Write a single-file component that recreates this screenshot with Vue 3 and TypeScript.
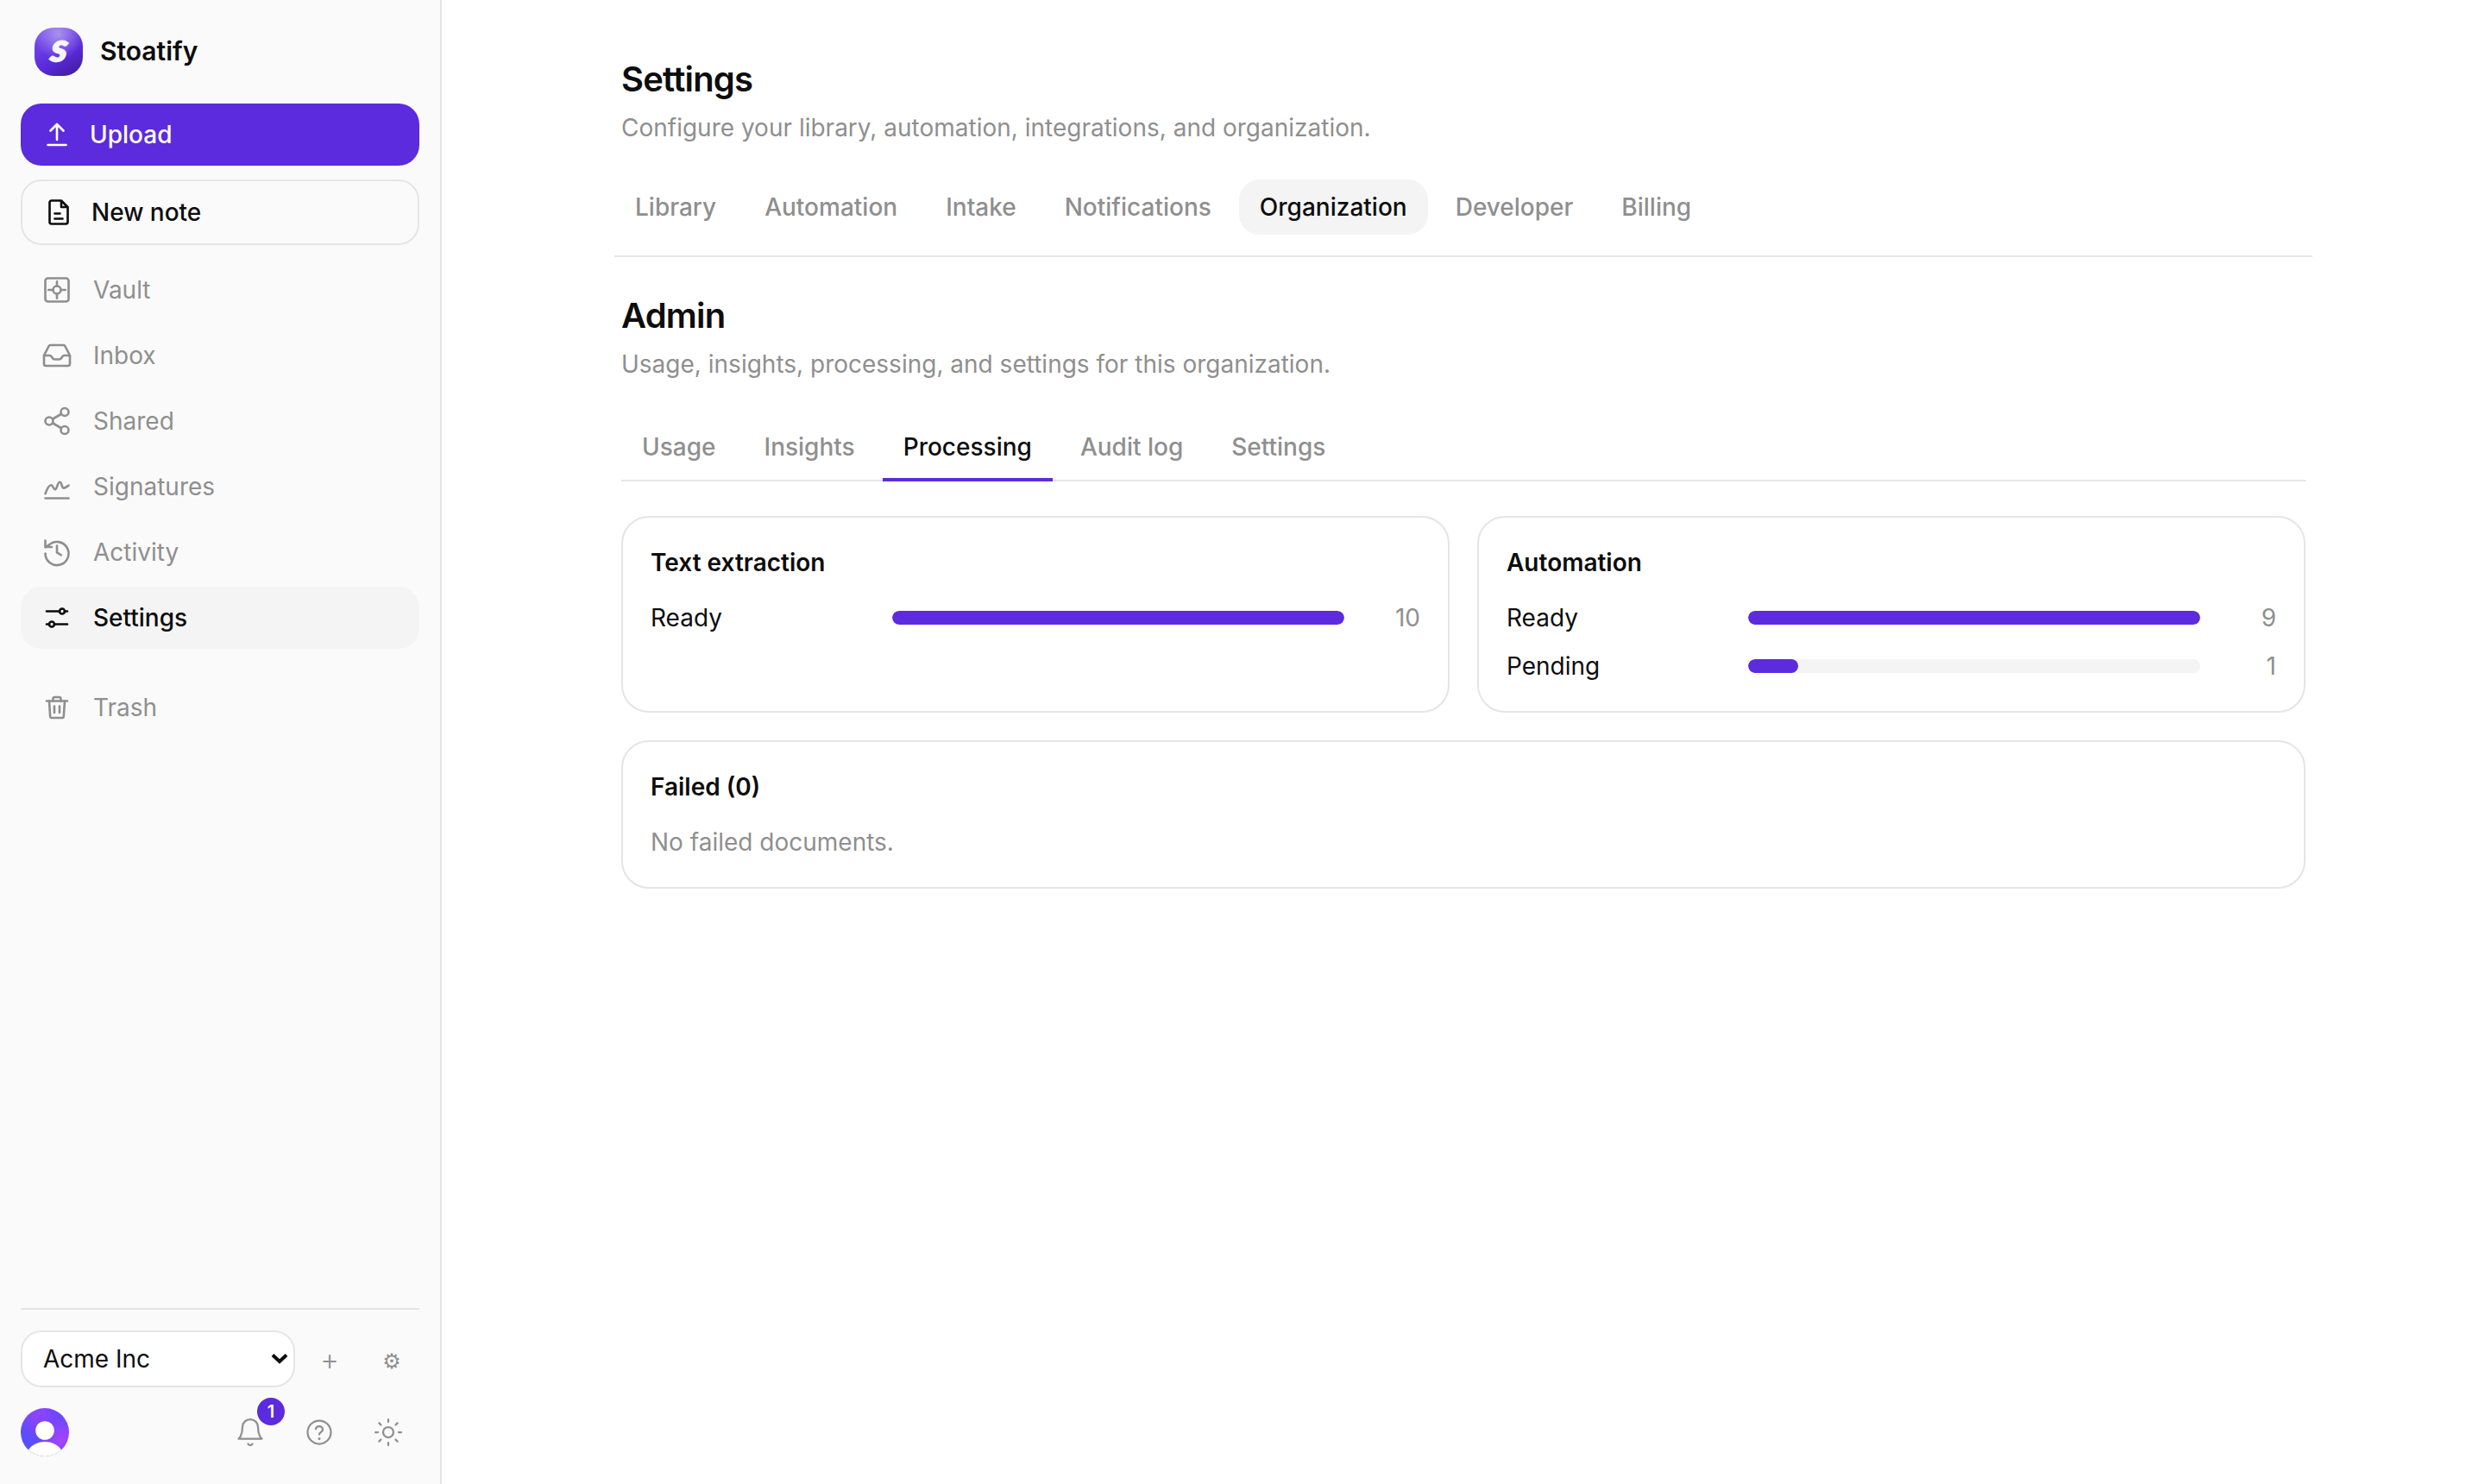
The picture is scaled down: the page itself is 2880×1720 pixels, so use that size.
<script setup lang="ts">
interface NavItem {
  label: string
  paths: string[]
  active?: boolean
}

interface Bar {
  label: string
  count: number
}

interface Card {
  title: string
  bars: Bar[]
}

const nav: NavItem[] = [
  {
    label: 'Vault',
    paths: [
      'M5 3h14a2 2 0 0 1 2 2v14a2 2 0 0 1-2 2H5a2 2 0 0 1-2-2V5a2 2 0 0 1 2-2z',
      'M15 12a3 3 0 1 1-6 0 3 3 0 0 1 6 0z',
      'M12 5.5V9M12 15v3.5M5.5 12H9M15 12h3.5',
    ],
  },
  {
    label: 'Inbox',
    paths: [
      'M22 12h-4.5c-1.8 0-1.7 3-3.5 3h-4c-1.800 0-1.700-3-3.500-3H2',
      'M5.600 5 2 12v6.500A1.500 1.500 0 0 0 3.500 20h17a1.500 1.500 0 0 0 1.500-1.500V12l-3.600-7A1.700 1.700 0 0 0 16.900 4H7.100a1.700 1.700 0 0 0-1.500 1z',
    ],
  },
  {
    label: 'Shared',
    paths: [
      'M21 5a3 3 0 1 1-6 0 3 3 0 0 1 6 0z',
      'M9 12a3 3 0 1 1-6 0 3 3 0 0 1 6 0z',
      'M21 19a3 3 0 1 1-6 0 3 3 0 0 1 6 0z',
      'M8.600 10.500l6.800-4M8.600 13.500l6.800 4',
    ],
  },
  {
    label: 'Signatures',
    paths: [
      'M3 17.500c1.600-4.500 3.200-6.700 4.600-6.700 1.500 0 1.500 3.400 2.900 3.400 1.600 0 1.900-5.700 3.700-5.700s1.200 4.600 3 4.600c1.200 0 2.500-1.100 3.800-2',
      'M3 21h18',
    ],
  },
  {
    label: 'Activity',
    paths: ['M3 3v5h5', 'M3 13a9 9 0 1 0 2.640-6.360L3.300 8', 'M12 7v5.200l3.200 2'],
  },
  {
    label: 'Settings',
    active: true,
    paths: [
      'M4 7h10M18 7h2M4 17h2M10 17h10',
      'M18 7a2 2 0 1 1-4 0 2 2 0 0 1 4 0z',
      'M10 17a2 2 0 1 1-4 0 2 2 0 0 1 4 0z',
    ],
  },
  {
    label: 'Trash',
    paths: [
      'M4 7h16M10 11v5M14 11v5',
      'M9 7V5.200A1.200 1.200 0 0 1 10.200 4h3.600A1.200 1.200 0 0 1 15 5.200V7',
      'M6 7l.8 12.100a1 1 0 0 0 1 .9h8.400a1 1 0 0 0 1-.9L18 7',
    ],
  },
]

const settingsTabs = ['Library', 'Automation', 'Intake', 'Notifications', 'Organization', 'Developer', 'Billing']
const adminTabs = ['Usage', 'Insights', 'Processing', 'Audit log', 'Settings']

const cards: Card[] = [
  { title: 'Text extraction', bars: [{ label: 'Ready', count: 10 }] },
  { title: 'Automation', bars: [{ label: 'Ready', count: 9 }, { label: 'Pending', count: 1 }] },
]

const share = (card: Card, bar: Bar): string =>
  `${(bar.count / Math.max(...card.bars.map((b) => b.count))) * 100}%`
</script>

<template>
  <div class="app">
    <aside class="sidebar">
      <div class="brand">
        <span class="logo"><span class="logo-mark">S</span></span>
        <span class="brand-name">Stoatify</span>
      </div>

      <button class="btn upload" type="button">
        <svg class="icon" viewBox="0 0 24 24"><path d="M12 16V4M7 9l5-5 5 5M5 20h14" /></svg>
        Upload
      </button>
      <button class="btn note" type="button">
        <svg class="icon" viewBox="0 0 24 24">
          <path d="M14 3H6.500A1.500 1.500 0 0 0 5 4.500v15A1.500 1.500 0 0 0 6.500 21h11a1.500 1.500 0 0 0 1.500-1.500V8zM14 3v5h5M9 13h4M9 17h6" />
        </svg>
        New note
      </button>

      <nav class="nav">
        <a v-for="item in nav" :key="item.label" class="nav-item" :class="{ active: item.active, trash: item.label === 'Trash' }">
          <svg class="icon" viewBox="0 0 24 24"><path v-for="p in item.paths" :key="p" :d="p" /></svg>
          {{ item.label }}
        </a>
      </nav>

      <footer class="foot">
        <div class="org-row">
          <div class="org-select">
            <span>Acme Inc</span>
            <svg class="chevron" viewBox="0 0 20 14"><path d="M2 2.500l8 7.500 8-7.500" /></svg>
          </div>
          <button class="glyph" type="button">+</button>
          <button class="glyph" type="button">⚙</button>
        </div>
        <div class="user-row">
          <div class="avatar">
            <svg viewBox="0 0 56 56">
              <circle cx="28" cy="26" r="10.800" fill="#fff" />
              <path d="M8 50C12 43 19 39 28 39s16 4 20 11l-4 6H12z" fill="#fff" />
            </svg>
          </div>
          <div class="tools">
            <button class="tool" type="button">
              <svg class="icon thin" viewBox="0 0 24 24">
                <path d="M6 8a6 6 0 0 1 12 0c0 7 3 9 3 9H3s3-2 3-9M10.300 21a1.940 1.940 0 0 0 3.400 0" />
              </svg>
              <span class="badge">1</span>
            </button>
            <button class="tool" type="button">
              <svg class="icon thin" viewBox="0 0 24 24">
                <circle cx="12" cy="12" r="9" />
                <path d="M9.300 9.400a2.750 2.750 0 0 1 5.400.6c0 1.800-2.700 2-2.700 3.700" />
                <circle class="dot" cx="12" cy="17" r="1" />
              </svg>
            </button>
            <button class="tool" type="button">
              <svg class="icon thin" viewBox="0 0 24 24">
                <circle cx="12" cy="12" r="4" />
                <path d="M12 2v2M12 20v2M4.930 4.930l1.410 1.410M17.660 17.660l1.410 1.410M2 12h2M20 12h2M6.340 17.660l-1.410 1.410M19.070 4.930l-1.410 1.410" />
              </svg>
            </button>
          </div>
        </div>
      </footer>
    </aside>

    <main class="main">
      <div class="content">
        <header>
          <h1>Settings</h1>
          <p class="sub">Configure your library, automation, integrations, and organization.</p>
        </header>
        <div class="pills">
          <a v-for="t in settingsTabs" :key="t" class="pill" :class="{ active: t === 'Organization' }">{{ t }}</a>
        </div>
        <header>
          <h1>Admin</h1>
          <p class="sub">Usage, insights, processing, and settings for this organization.</p>
        </header>
        <div class="tabs">
          <a v-for="t in adminTabs" :key="t" class="tab" :class="{ active: t === 'Processing' }">{{ t }}</a>
        </div>
        <div class="grid">
          <section v-for="card in cards" :key="card.title" class="card">
            <h2>{{ card.title }}</h2>
            <div class="bars">
              <div v-for="bar in card.bars" :key="bar.label" class="bar-row">
                <span>{{ bar.label }}</span>
                <div class="track"><div class="fill" :style="{ width: share(card, bar) }"></div></div>
                <span class="count">{{ bar.count }}</span>
              </div>
            </div>
          </section>
          <section class="card wide">
            <h2>Failed (0)</h2>
            <p class="sub">No failed documents.</p>
          </section>
        </div>
      </div>
    </main>
  </div>
</template>

<style>
body {
  margin: 0;
  background: #fff;
}
</style>

<style scoped>
* {
  box-sizing: border-box;
}

.app {
  display: flex;
  height: 100vh;
  font-family: Inter, 'Liberation Sans', sans-serif;
  font-size: 28px;
  line-height: 40px;
  color: #0d0d0d;
  overflow: hidden;
}

h1,
h2,
p {
  margin: 0;
}

button {
  font: inherit;
  border: 0;
  background: none;
  padding: 0;
}

.sidebar {
  width: 512px;
  flex: none;
  display: flex;
  flex-direction: column;
  padding: 32px 24px 24px;
  background: #fafafa;
  border-right: 2px solid #e5e5e5;
}

.brand {
  display: flex;
  align-items: center;
  gap: 20px;
  padding: 0 16px;
  margin-bottom: 32px;
}

.logo {
  width: 56px;
  height: 56px;
  border-radius: 22px;
  display: flex;
  align-items: center;
  justify-content: center;
  background:
    radial-gradient(circle at 50% 14%, rgba(255, 255, 255, 0.42), rgba(255, 255, 255, 0) 52%),
    linear-gradient(150deg, #7c55ea 0%, #5b2bdd 58%, #3c1a94 100%);
}

.logo-mark {
  font-family: Lato, Inter, sans-serif;
  font-weight: 900;
  font-style: italic;
  font-size: 32px;
  line-height: 52px;
  margin-bottom: 3px;
  color: #f7f4ff;
  -webkit-text-stroke: 2px #f7f4ff;
  transform: scaleX(1.12) skewX(-6deg);
}

.brand-name {
  font-size: 30px;
  font-weight: 600;
  margin-bottom: 2px;
}

.icon {
  width: 36px;
  height: 36px;
  flex: none;
  fill: none;
  stroke: currentColor;
  stroke-width: 1.75;
  stroke-linecap: round;
  stroke-linejoin: round;
}

.icon.thin {
  stroke-width: 1.5;
}

.icon .dot {
  fill: currentColor;
  stroke: none;
}

.btn {
  display: flex;
  align-items: center;
  gap: 20px;
  padding: 0 24px;
  border-radius: 24px;
  font-weight: 500;
}

.upload {
  height: 72px;
  background: #5b2bdd;
  color: #fff;
  margin-bottom: 16px;
}

.note {
  height: 76px;
  border: 2px solid #e5e5e5;
  color: #0d0d0d;
  margin-bottom: 16px;
}

.nav {
  display: flex;
  flex-direction: column;
  gap: 4px;
}

.nav-item {
  height: 72px;
  display: flex;
  align-items: center;
  gap: 24px;
  padding: 0 24px;
  border-radius: 24px;
  color: #8f8f8f;
}

.nav-item.active {
  background: #f4f4f4;
  color: #0d0d0d;
  font-weight: 500;
}

.nav-item.trash {
  margin-top: 28px;
}

.foot {
  margin-top: auto;
  border-top: 2px solid #e5e5e5;
  padding-top: 24px;
}

.org-row {
  display: flex;
  align-items: center;
  gap: 8px;
  margin-bottom: 16px;
}

.org-select {
  flex: 1;
  height: 66px;
  display: flex;
  align-items: center;
  justify-content: space-between;
  padding: 0 6px 0 24px;
  border: 2px solid #e5e5e5;
  border-radius: 24px;
  background: #fff;
}

.chevron {
  width: 20px;
  height: 14px;
  fill: none;
  stroke: currentColor;
  stroke-width: 4;
}

.glyph {
  width: 64px;
  height: 64px;
  padding-top: 6px;
  font-family: 'DejaVu Sans', sans-serif;
  font-size: 24px;
  color: #8f8f8f;
}

.user-row {
  display: flex;
  align-items: center;
  justify-content: space-between;
}

.avatar {
  width: 56px;
  height: 56px;
  border-radius: 50%;
  overflow: hidden;
  background:
    radial-gradient(circle at 35% 12%, #8f45fb 0%, rgba(143, 69, 251, 0) 40%),
    radial-gradient(circle at 85% 65%, #a544fb 0%, rgba(165, 68, 251, 0) 45%),
    linear-gradient(45deg, #4458ff, #6c47ff 45%);
}

.avatar svg {
  display: block;
}

.tools {
  display: flex;
  gap: 8px;
}

.tool {
  position: relative;
  width: 72px;
  height: 72px;
  display: flex;
  align-items: center;
  justify-content: center;
  color: #8f8f8f;
}

.badge {
  position: absolute;
  top: -4px;
  right: -4px;
  width: 32px;
  height: 32px;
  border-radius: 50%;
  background: #5b2bdd;
  color: #fff;
  font-size: 20px;
  font-weight: 600;
  line-height: 32px;
  text-align: center;
}

.main {
  flex: 1;
  padding-top: 64px;
}

.content {
  width: 1952px;
  margin: 0 auto;
}

h1 {
  font-size: 40px;
  line-height: 56px;
  font-weight: 600;
  letter-spacing: -0.02em;
  margin-bottom: 8px;
}

.sub {
  color: #8f8f8f;
}

.pills {
  display: flex;
  gap: 8px;
  margin: 40px -8px;
  padding-bottom: 24px;
  border-bottom: 2px solid #e5e5e5;
}

.pill {
  padding: 12px 24px;
  border-radius: 24px;
  color: #8f8f8f;
  font-weight: 500;
}

.pill.active {
  background: #f4f4f4;
  color: #0d0d0d;
}

.tabs {
  display: flex;
  gap: 8px;
  margin: 40px 0;
  border-bottom: 2px solid #e5e5e5;
}

.tab {
  padding: 16px 24px;
  margin-bottom: -2px;
  border-bottom: 4px solid transparent;
  color: #8f8f8f;
  font-weight: 500;
}

.tab.active {
  border-bottom-color: #5b2bdd;
  color: #0d0d0d;
}

.grid {
  display: grid;
  grid-template-columns: 1fr 1fr;
  gap: 32px;
}

.card {
  padding: 32px;
  border: 2px solid #e5e5e5;
  border-radius: 32px;
}

.card.wide {
  grid-column: 1 / -1;
}

h2 {
  font-size: 28px;
  line-height: 40px;
  font-weight: 600;
  margin-bottom: 24px;
}

.bars {
  display: flex;
  flex-direction: column;
  gap: 16px;
}

.bar-row {
  display: grid;
  grid-template-columns: 256px 1fr 64px;
  align-items: center;
  gap: 24px;
}

.track {
  height: 16px;
  border-radius: 8px;
  background: #f4f4f4;
  overflow: hidden;
}

.fill {
  height: 100%;
  border-radius: 8px;
  background: #5b2bdd;
}

.count {
  text-align: right;
  color: #8f8f8f;
}
</style>
